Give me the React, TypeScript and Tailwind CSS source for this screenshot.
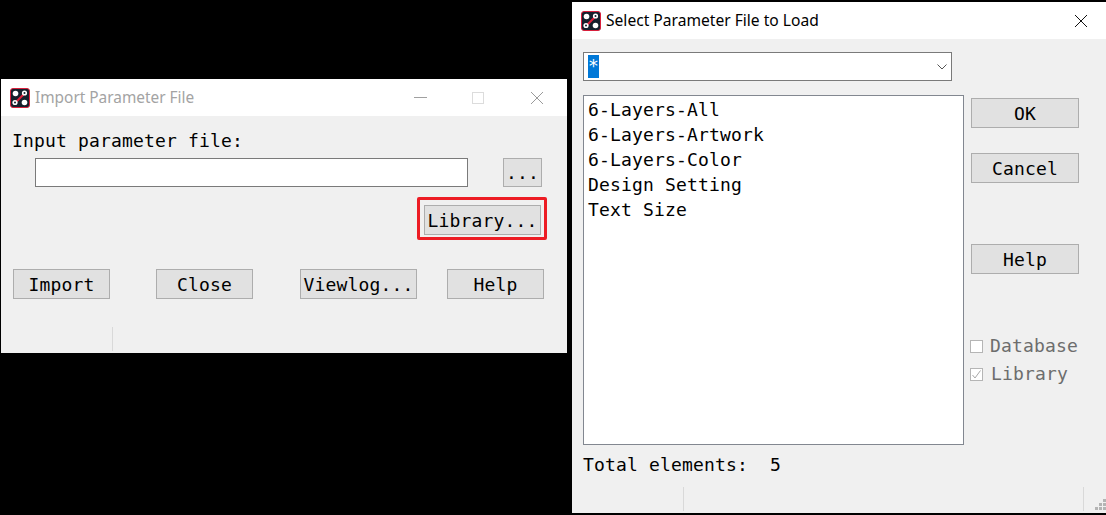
import React from "react";

const mono = "font-['DejaVu_Sans_Mono',monospace] text-[18px] tracking-[0.16px] text-black";

function AppIcon() {
  return (
    <svg width="20" height="20" viewBox="0 0 20 20" className="shrink-0">
      <rect x="0.5" y="0.5" width="19" height="19" rx="2.5" fill="#16202c" stroke="#d8203c" />
      <line x1="4" y1="16" x2="16" y2="4" stroke="#e0203c" strokeWidth="2" />
      <circle cx="5.5" cy="5.5" r="2.8" fill="#fff" />
      <circle cx="14.5" cy="5" r="2.6" fill="#fff" />
      <circle cx="14.5" cy="5" r="1" fill="#16202c" />
      <circle cx="5" cy="14.5" r="2.6" fill="#fff" />
      <circle cx="5" cy="14.5" r="1" fill="#16202c" />
      <circle cx="14.5" cy="14.5" r="2.8" fill="#fff" />
    </svg>
  );
}

function Btn({ label, className }: { label: string; className: string }) {
  return (
    <div
      className={`h-[30px] shrink-0 flex items-center justify-center bg-[#e1e1e1] border border-[#adadad] ${mono} ${className}`}
    >
      {label}
    </div>
  );
}

function ImportWindow() {
  return (
    <div className="absolute left-[1px] top-[79px] w-[566px] h-[274px] bg-[#f0f0f0] flex flex-col">
      <div className="h-[37px] bg-white flex items-center pl-[9px] shrink-0">
        <AppIcon />
        <span className="ml-[5px] font-['Noto_Sans',sans-serif] text-[15.4px] text-[#a3a3a3]">
          Import Parameter File
        </span>
        <div className="ml-auto flex items-center">
          <div className="w-[13px] h-px bg-[#a0a0a0]" />
          <div className="ml-[45px] w-[12px] h-[12px] border border-[#dcdcdc]" />
          <svg width="14" height="14" viewBox="0 0 14 14" className="ml-[46px] mr-[23px]">
            <path d="M1 1L13 13M13 1L1 13" stroke="#9a9a9a" strokeWidth="1" fill="none" />
          </svg>
        </div>
      </div>
      <div className={`mt-[13px] ml-[11px] h-[24px] leading-[24px] ${mono}`}>Input parameter file:</div>
      <div className="mt-[5px] flex">
        <div className="ml-[34px] w-[433px] h-[29px] bg-white border border-[#7a7a7a]" />
        <Btn label="..." className="ml-[35px] w-[39px] !h-[29px]" />
      </div>
      <div className="mt-[10px] flex justify-end mr-[20px]">
        <div className="w-[130px] h-[43px] border-[3px] border-[#ed1c24] rounded-[2px] pl-[4px] pt-[5px]">
          <Btn label="Library..." className="w-[117px]" />
        </div>
      </div>
      <div className="mt-[29px] flex">
        <Btn label="Import" className="ml-[12px] w-[97px]" />
        <Btn label="Close" className="ml-[46px] w-[97px]" />
        <Btn label="Viewlog..." className="ml-[47px] w-[117px]" />
        <Btn label="Help" className="ml-[30px] w-[97px]" />
      </div>
      <div className="mt-[28px] ml-[111px] w-px h-[24px] bg-[#d9d9d9]" />
    </div>
  );
}

function SelectWindow() {
  const files = ["6-Layers-All", "6-Layers-Artwork", "6-Layers-Color", "Design Setting", "Text Size"];
  return (
    <div className="absolute left-[572px] top-[2px] w-[534px] h-[511px] bg-[#f0f0f0] flex flex-col">
      <div className="h-[37px] bg-white flex items-center pl-[9px] shrink-0">
        <AppIcon />
        <span className="ml-[5px] font-['Noto_Sans',sans-serif] text-[15.6px] text-black">
          Select Parameter File to Load
        </span>
        <svg width="14" height="14" viewBox="0 0 14 14" className="ml-auto mr-[18px]">
          <path d="M1 1L13 13M13 1L1 13" stroke="#111" strokeWidth="1" fill="none" />
        </svg>
      </div>
      <div className="mt-[13px] ml-[11px] w-[369px] h-[29px] bg-white border border-[#7a7a7a] flex items-center pl-[4px] shrink-0">
        <span className={`h-[23px] w-[11px] leading-[22px] bg-[#0078d7] ${mono} !text-white`}>*</span>
        <svg width="10" height="6" viewBox="0 0 10 6" className="ml-auto mr-[4px]">
          <path d="M0.5 0.5L5 5L9.5 0.5" stroke="#555" fill="none" />
        </svg>
      </div>
      <div className="mt-[14px] flex h-[350px] shrink-0">
        <div className="ml-[11px] w-[381px] bg-white border border-[#828790] pl-[4px] pt-[1px]">
          {files.map((f) => (
            <div key={f} className={`h-[25px] leading-[25px] ${mono}`}>
              {f}
            </div>
          ))}
        </div>
        <div className="ml-[7px] w-[108px] flex flex-col">
          <Btn label="OK" className="mt-[3px] w-full" />
          <Btn label="Cancel" className="mt-[25px] w-full" />
          <Btn label="Help" className="mt-[61px] w-full" />
          <div className="mt-[65px] ml-[-1px] h-[14px] flex items-center">
            <div className="w-[13px] h-[13px] bg-white border border-[#b5b5b5]" />
            <span className={`ml-[7px] mb-[2px] ${mono} !text-[#6d6d6d]`}>Database</span>
          </div>
          <div className="mt-[14px] ml-[-1px] h-[14px] flex items-center">
            <div className="w-[13px] h-[13px] bg-white border border-[#b5b5b5] flex items-center justify-center">
              <svg width="11" height="11" viewBox="0 0 11 11">
                <path d="M1.5 6L4 9L9.5 1.5" stroke="#a8a8a8" fill="none" />
              </svg>
            </div>
            <span className={`ml-[8px] mb-[2px] ${mono} !text-[#6d6d6d]`}>Library</span>
          </div>
        </div>
      </div>
      <div className={`mt-[8px] ml-[11px] h-[24px] leading-[24px] whitespace-pre ${mono}`}>Total elements:  5</div>
      <div className="mt-[10px] flex items-end h-[24px]">
        <div className="ml-[111px] w-px h-full bg-[#d9d9d9]" />
        <div className="ml-[399px] w-px h-full bg-[#d9d9d9]" />
        <svg width="11" height="11" viewBox="0 0 11 11" className="ml-[11px] mb-[1px]">
          <path d="M8 0h3v3H8zM4 4h3v3H4zM8 4h3v3H8zM0 8h3v3H0zM4 8h3v3H4zM8 8h3v3H8z" fill="#b4b4b4" />
        </svg>
      </div>
    </div>
  );
}

export default function App() {
  return (
    <div className="relative w-[1106px] h-[515px] bg-black overflow-hidden">
      <ImportWindow />
      <SelectWindow />
    </div>
  );
}
